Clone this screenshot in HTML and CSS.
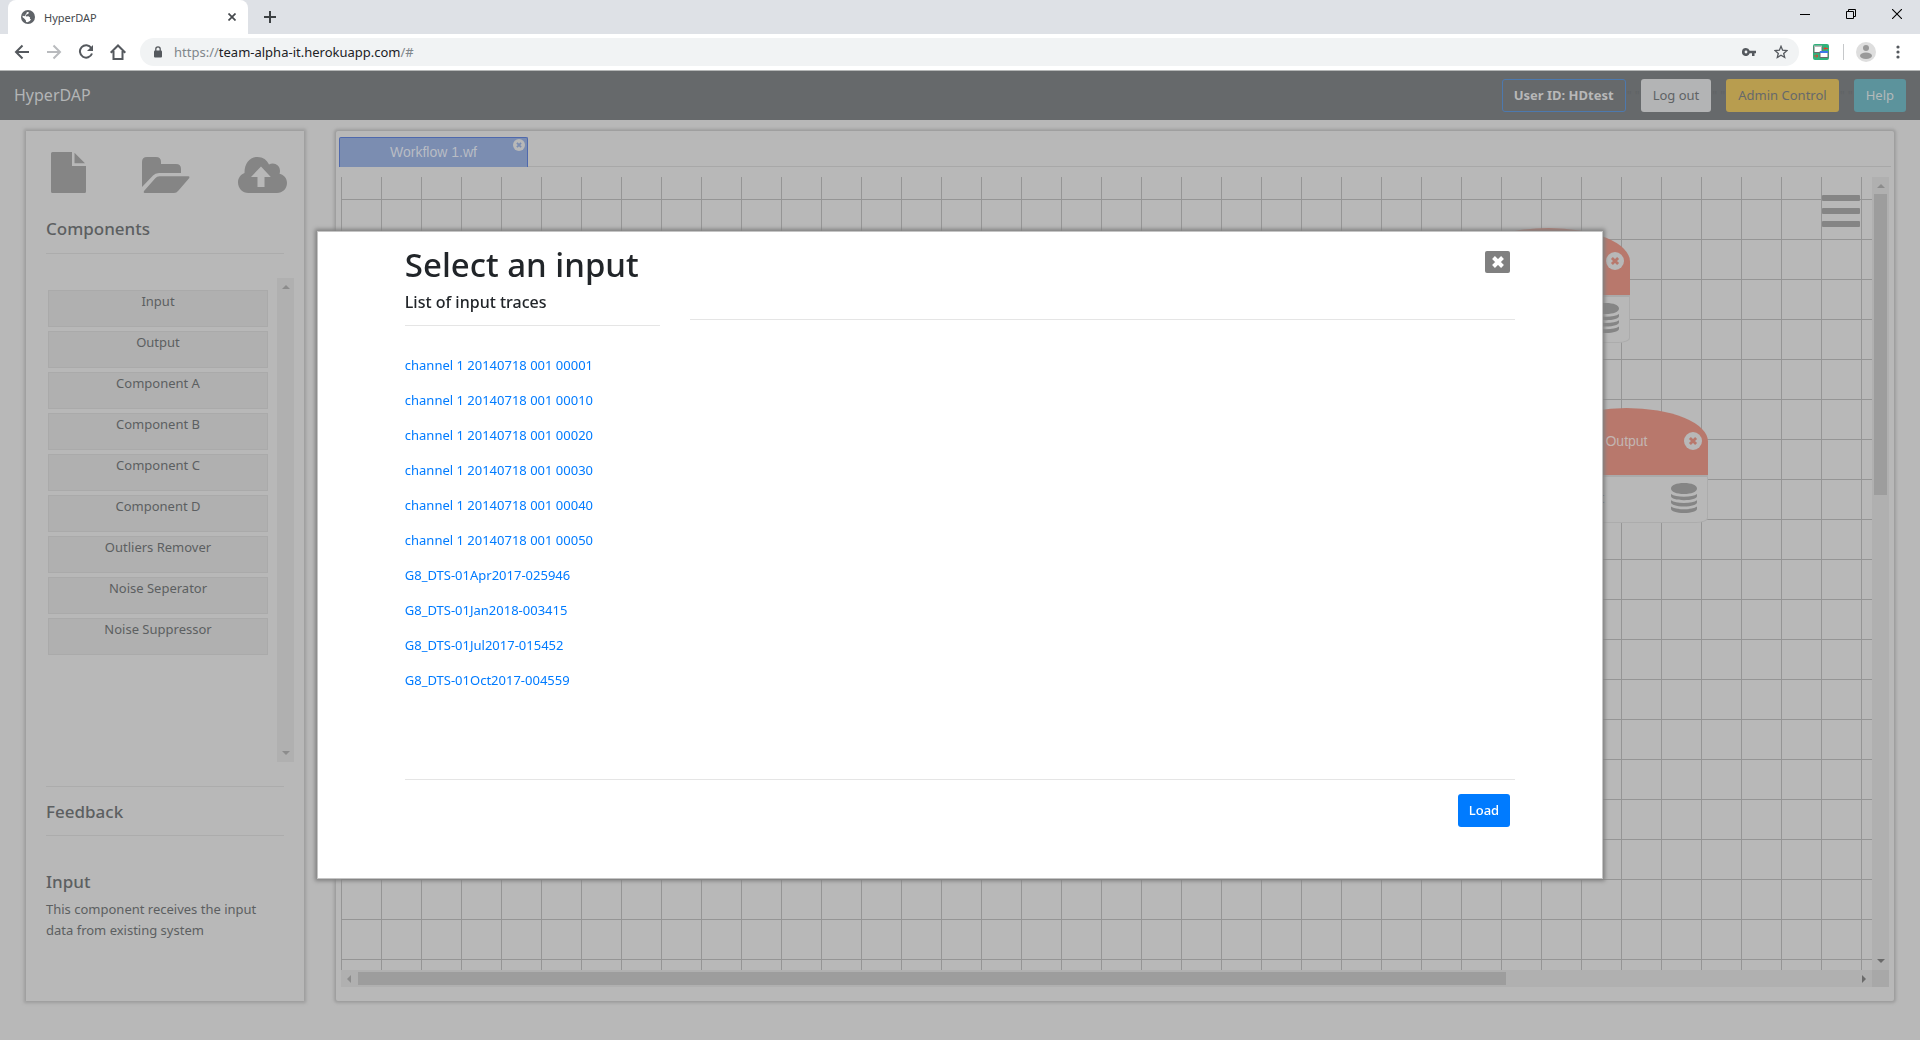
FILE: index.html
```html
<!DOCTYPE html>
<html lang="en">
<head>
<meta charset="utf-8">
<title>HyperDAP</title>
<link rel="stylesheet" href="styles.css">
</head>
<body>
<svg class="symbols" aria-hidden="true">
  <symbol id="i-circle-x" viewBox="0 0 18 18"><circle cx="9" cy="9" r="9" fill="#b8b8b8"/><path d="M5.900 5.900l6.200 6.200M12.100 5.900l-6.200 6.200" stroke="currentColor" stroke-width="2.800"/></symbol>
  <symbol id="i-database" viewBox="0 0 26 30"><path fill="#858585" d="M0 5.500C0 2.200 5.500 0 13 0s13 2.200 13 5.500S20.500 11 13 11 0 8.800 0 5.500zM0 11c2.500 1.700 7 2.700 13 2.700S23.500 12.700 26 11v2c0 2.500-5.500 4.200-13 4.200S0 15.500 0 13zM0 17.300C2.500 19 7 20 13 20s10.500-1 13-2.700v2c0 2.500-5.500 4.200-13 4.200S0 21.800 0 19.300zM0 23.600c2.500 1.700 7 2.700 13 2.700s10.500-1 13-2.700v2.200C26 28.300 20.500 30 13 30S0 28.300 0 25.800z"/></symbol>
</svg>

<header class="browser">
  <div class="tabstrip">
    <div class="browser-tab">
      <svg width="14" height="14" viewBox="0 0 14 14"><circle cx="7" cy="7" r="7" fill="#5f6368"/><path fill="#fff" d="M7.500 2l.3 1.300-1.500 1-1.600.6.200 1.600 2.500-.3 1.700 1.200-.2 1.500 1.200.3-1.300 1.800-2.300 1.200-1.400-.2-.3-1.800L3.200 8.500 1.400 7A5.700 5.700 0 0 1 7.500 2z"/><path fill="#5f6368" d="M1.500 5.500l2 .7 1.300-1.900 1.200-1.900L4 1.500z"/></svg>
      <span class="browser-title">HyperDAP</span>
      <button class="plain" aria-label="Close tab"><svg width="8" height="8" viewBox="0 0 8 8"><path d="M.5.500l7 7m0-7l-7 7" stroke="#45494d" stroke-width="1.700"/></svg></button>
    </div>
    <button class="plain new-tab" aria-label="New tab"><svg width="12" height="12" viewBox="0 0 12 12"><path d="M6 0v12M0 6h12" stroke="#3c4043" stroke-width="2"/></svg></button>
    <div class="window-buttons">
      <button class="plain" aria-label="Minimize"><svg width="10" height="10" viewBox="0 0 10 10"><path d="M0 5.500h10" stroke="#000"/></svg></button>
      <button class="plain" aria-label="Restore"><svg width="10" height="10" viewBox="0 0 10 10"><path d="M.5 2.500h7v7h-7zM2.500 2.500v-2h7v7h-2" fill="none" stroke="#000"/></svg></button>
      <button class="plain" aria-label="Close"><svg width="10" height="10" viewBox="0 0 10 10"><path d="M0 0l10 10M10 0L0 10" stroke="#000" stroke-width="1.100"/></svg></button>
    </div>
  </div>
  <div class="toolbar">
    <button class="plain" aria-label="Back"><svg width="16" height="16" viewBox="0 0 16 16"><path d="M15 8H2M8.500 1.500L2 8l6.500 6.500" fill="none" stroke="#55595e" stroke-width="2"/></svg></button>
    <button class="plain" aria-label="Forward"><svg width="16" height="16" viewBox="0 0 16 16"><path d="M1 8h13M7.500 1.500L14 8l-6.500 6.500" fill="none" stroke="#b9bbbe" stroke-width="2"/></svg></button>
    <button class="plain" aria-label="Reload"><svg width="16" height="16" viewBox="0 0 16 16"><path d="M13.300 4A6.200 6.200 0 1 0 14 9.500" fill="none" stroke="#55595e" stroke-width="2"/><path d="M15 1v6H9z" fill="#55595e"/></svg></button>
    <button class="plain" aria-label="Home"><svg width="16" height="16" viewBox="0 0 16 16"><path d="M.7 8.800L8 1.500l7.300 7.300M3.500 7v8h9V7" fill="none" stroke="#55595e" stroke-width="2"/></svg></button>
    <div class="address">
      <svg width="8" height="12" viewBox="0 0 8 12"><path d="M1.800 5V3a2.200 2.200 0 0 1 4.400 0v2" fill="none" stroke="#55595e" stroke-width="1.300"/><rect y="4.500" width="8" height="7" rx="1" fill="#55595e"/></svg>
      <span class="url">https://<b>team-alpha-it.herokuapp.com</b>/#</span>
      <svg width="14" height="8" viewBox="0 0 14 8"><path fill="#55595e" fill-rule="evenodd" d="M4 0a4 4 0 1 0 3.700 5.300H10V8h2.500V5.300H14V2.700H7.700A4 4 0 0 0 4 0zm0 2.600a1.400 1.400 0 1 1 0 2.800 1.400 1.400 0 0 1 0-2.800z"/></svg>
      <svg width="14" height="14" viewBox="0 0 14 14"><path d="M7 1.300l1.600 3.900 4.300.4-3.200 2.800 1 4.100L7 10.300l-3.700 2.200 1-4.100L1.100 5.600l4.300-.4z" fill="none" stroke="#55595e" stroke-width="1.300"/></svg>
    </div>
    <svg width="16" height="16" viewBox="0 0 16 16"><rect width="16" height="16" rx="2" fill="#30b27b"/><path d="M1 2.500h8v6H1zM7 7.500h8v6H7z" fill="#fff" stroke="#6b6b6b"/><path d="M1 1.500h8v1.500H1z" fill="#bbb"/><path d="M7 7h8v2H7z" fill="#3e78e8"/><path d="M15 4.500h-4m1.500-1.500L11 4.500 12.500 6M1 12h4m-1.500-1.500L5 12l-1.500 1.500" fill="none" stroke="#e33c2e"/></svg>
    <span class="divider"></span>
    <svg width="20" height="20" viewBox="0 0 20 20"><circle cx="10" cy="10" r="10" fill="#dedede"/><circle cx="10" cy="6" r="3" fill="#999"/><ellipse cx="10" cy="13.800" rx="6" ry="3.200" fill="#999"/></svg>
    <svg class="kebab" width="4" height="14" viewBox="0 0 4 14"><g fill="#55595e"><circle cx="2" cy="2" r="1.600"/><circle cx="2" cy="7" r="1.600"/><circle cx="2" cy="12" r="1.600"/></g></svg>
  </div>
</header>

<nav class="navbar">
  <a class="brand" href="#">HyperDAP</a>
  <button class="btn btn-user">User ID: HDtest</button><span class="sep">" "</span>
  <button class="btn btn-light">Log out</button><span class="sep">" "</span>
  <button class="btn btn-warning">Admin Control</button><span class="sep">" "</span>
  <button class="btn btn-info">Help</button>
</nav>

<main class="workspace">
  <aside class="panel sidebar">
    <div class="file-actions">
      <button class="plain" aria-label="New file"><svg width="36" height="41" viewBox="0 0 36 41"><path fill="#858585" d="M1.500 0H21v14h14v25.500q0 1.500-1.500 1.500h-32Q0 41 0 39.500v-38Q0 0 1.500 0zM23.500.800L34 11.300H23.500z"/></svg></button>
      <button class="plain" aria-label="Open file"><svg width="48" height="36" viewBox="0 0 48 36"><path fill="#858585" d="M0 30V5q0-5 5-5h9q5 0 5 5v2h15q5 0 5 5v4H17q-4 0-6 2.500zM2.500 36q-1.500-.5-.5-2L13.500 21q1.500-1.700 4-1.700H46.500q1.500.2.8 1.700L36.500 33.500Q34.500 36 32 36z"/></svg></button>
      <button class="plain" aria-label="Upload"><svg width="49" height="36" viewBox="0 0 49 36"><path fill="#858585" fill-rule="evenodd" d="M10.500 36C4.500 36 0 31.200 0 25.500c0-4.500 2.500-7.800 6.500-9.500C6.500 6 12 0 19.500 0c5.500 0 9.500 3 11.500 7.500 5-2.500 11 .500 11 6.500 0 1-.2 1.800-.5 2.700C46 17.700 49 21.300 49 26c0 5.700-4.500 10-10 10zM19.500 30h7V20h6.300L23 9.500 13 20h6.500z"/></svg></button>
    </div>
    <h2 class="heading">Components</h2>
    <hr>
    <div class="list-box">
      <ul class="component-list">
        <li>Input</li><li>Output</li><li>Component A</li><li>Component B</li><li>Component C</li><li>Component D</li><li>Outliers Remover</li><li>Noise Seperator</li><li>Noise Suppressor</li>
      </ul>
      <div class="vbar"><i class="arrow up"></i><i class="arrow down"></i></div>
    </div>
    <hr>
    <h2 class="heading feedback">Feedback</h2>
    <hr>
    <h2 class="heading detail">Input</h2>
    <p class="description">This component receives the input data from existing system</p>
  </aside>

  <section class="panel editor">
    <div class="file-tabs">
      <div class="file-tab">Workflow 1.wf<button class="plain tab-close" aria-label="Close workflow"><svg width="12" height="12"><use href="#i-circle-x"/></svg></button></div>
    </div>
    <div class="viewport">
      <div class="canvas">
        <div class="node node-input">
          <div class="node-head">Input<svg class="node-close" width="18" height="18"><use href="#i-circle-x"/></svg></div>
          <div class="node-body"><span>Input</span><svg width="26" height="30"><use href="#i-database"/></svg></div>
        </div>
        <div class="node node-output">
          <div class="node-head">Output<svg class="node-close" width="18" height="18"><use href="#i-circle-x"/></svg></div>
          <div class="node-body"><span>Output</span><svg width="26" height="30"><use href="#i-database"/></svg></div>
        </div>
        <button class="plain menu" aria-label="Menu"><i></i><i></i><i></i></button>
      </div>
      <div class="vbar"><i class="arrow up"></i><i class="thumb"></i><i class="arrow down dark"></i></div>
      <div class="hbar"><i class="arrow left"></i><i class="thumb"></i><i class="arrow right dark"></i></div>
      <div class="corner"></div>
    </div>
  </section>
</main>

<dialog class="modal" open aria-labelledby="modal-title">
  <button class="modal-close" aria-label="Close"><svg width="12" height="12" viewBox="0 0 12 12"><path d="M1.500 1.500l9 9m0-9l-9 9" stroke="#fff" stroke-width="4"/></svg></button>
  <h1 class="modal-title" id="modal-title">Select an input</h1>
  <div class="row">
    <div class="col traces">
      <h2 class="subtitle">List of input traces</h2>
      <hr>
      <ul class="trace-list">
        <li><a href="#">channel 1 20140718 001 00001</a></li>
        <li><a href="#">channel 1 20140718 001 00010</a></li>
        <li><a href="#">channel 1 20140718 001 00020</a></li>
        <li><a href="#">channel 1 20140718 001 00030</a></li>
        <li><a href="#">channel 1 20140718 001 00040</a></li>
        <li><a href="#">channel 1 20140718 001 00050</a></li>
        <li><a href="#">G8_DTS-01Apr2017-025946</a></li>
        <li><a href="#">G8_DTS-01Jan2018-003415</a></li>
        <li><a href="#">G8_DTS-01Jul2017-015452</a></li>
        <li><a href="#">G8_DTS-01Oct2017-004559</a></li>
      </ul>
    </div>
    <div class="col preview"><hr></div>
  </div>
  <hr>
  <div class="modal-footer"><button class="btn btn-primary">Load</button></div>
</dialog>
</body>
</html>
```
FILE: styles.css
```css
* { box-sizing: border-box; }
body {
  margin: 0;
  min-height: 100vh;
  display: flex;
  flex-direction: column;
  background: #b8b8b8;
  color: #5c5f61;
  font: 13px/21px "Noto Sans", "Open Sans", sans-serif;
}
svg { display: block; flex: none; }
.symbols { position: absolute; width: 0; height: 0; }
button { font: inherit; }
.plain { border: 0; padding: 0; background: none; display: block; }
ul { list-style: none; margin: 0; padding: 0; }
h1, h2, p { margin: 0; }
hr { border: 0; border-top: 1px solid #acacac; margin: 0; }

/* browser frame */
.browser { background: #fff; border-bottom: 1px solid #b5b7b7; }
.tabstrip { display: flex; align-items: center; height: 34px; background: #dee1e6; padding-left: 8px; }
.browser-tab {
  display: flex;
  align-items: center;
  width: 240px;
  height: 34px;
  padding: 0 12px 0 13px;
  background: #fff;
  border-radius: 8px 8px 0 0;
}
.browser-title { flex: 1; margin-left: 9px; font-size: 11px; color: #45494d; }
.new-tab { margin-left: 16px; }
.window-buttons { display: flex; gap: 36px; margin-left: auto; padding: 0 18px 6px 0; }
.toolbar { display: flex; align-items: center; height: 36px; padding: 0 20px 0 14px; gap: 16px; }
.address {
  flex: 1;
  display: flex;
  align-items: center;
  height: 28px;
  margin: 0 -2px;
  padding: 0 11px 0 14px;
  border-radius: 14px;
  background: #f1f3f4;
}
.url { flex: 1; margin-left: 12px; color: #80868b; }
.url b { font-weight: 400; color: #202124; }
.address svg + svg { margin-left: 18px; }
.divider { width: 1px; height: 16px; margin: 0 -4px 0 -2px; background: #c6c8ca; }
.kebab { margin-left: 4px; }

/* application bar */
.navbar { display: flex; align-items: center; height: 49px; padding: 0 14px; background: #66696b; }
.brand { margin-right: auto; font-size: 16px; color: #b3b5b6; text-decoration: none; }
.btn { height: 33px; padding: 0 11px; border: 1px solid transparent; border-radius: 3px; line-height: 21px; }
.btn-user { background: none; border-color: #4d79ae; color: #b8b8b8; font-weight: 700; }
.btn-light { background: #b3b4b5; color: #606365; }
.btn-warning { background: #b89d4f; color: #66696b; }
.btn-info { background: #5c939c; color: #b3b9ba; }
.btn-primary { background: #007bff; color: #fff; font-weight: 500; padding: 0 10px; }
.sep { width: 15px; text-align: center; font-size: 12px; color: #606365; }

/* workspace */
.workspace { flex: 1; display: grid; grid-template-columns: 278px 1fr; gap: 32px; padding: 11px 26px 39px; }
.panel { min-width: 0; border-radius: 2px; box-shadow: 0 0 3px 2px #9c9c9c; }
.sidebar { padding: 21px 20px 0; border-radius: 0; }
.file-actions { display: flex; justify-content: space-between; align-items: flex-end; padding: 0 0 0 5px; margin-right: -3px; }
.file-actions button:nth-child(2) { margin-left: 6px; }
.heading { font-size: 17px; font-weight: 500; line-height: 24px; margin: 24px 0 12px; }
.list-box { display: flex; justify-content: space-between; height: 484px; margin: 24px -10px 24px 0; }
.component-list { flex: 1; margin: 12px 9px 0 2px; display: flex; flex-direction: column; gap: 4px; }
.component-list li { height: 37px; border: 1px solid #aaa; background: #b0b0b0; text-align: center; }
.heading.feedback { margin: 13px 0 11px; }
.heading.detail { margin: 34px 0 5px; }

.vbar { width: 17px; background: #b0b0b0; display: flex; flex-direction: column; align-items: center; }
.hbar { height: 17px; background: #b0b0b0; display: flex; align-items: center; }
.arrow { border: 4px solid transparent; flex: none; }
.arrow.up { border-bottom-color: #8c8c8c; border-top-width: 0; margin: 7px 0 6px; }
.arrow.down { border-top-color: #8c8c8c; border-bottom-width: 0; margin: auto 0 7px; }
.arrow.left { border-right-color: #8c8c8c; border-left-width: 0; margin: 0 7px 0 6px; }
.arrow.right { border-left-color: #8c8c8c; border-right-width: 0; margin: 0 6px 0 auto; }
.arrow.down.dark { border-top-color: #6a6a6a; }
.arrow.right.dark { border-left-color: #6a6a6a; }
.thumb { background: #9d9d9d; }
.vbar .thumb { width: 13px; height: 38%; }
.hbar .thumb { height: 13px; width: 75%; }

.editor { display: flex; flex-direction: column; padding: 6px 3px 14px; }
.file-tabs { display: flex; border-bottom: 1px solid #a8a8a8; }
.file-tab {
  position: relative;
  width: 189px;
  height: 30px;
  margin-bottom: -1px;
  border: 1px solid #4f69ad;
  border-bottom: 0;
  border-radius: 2px 2px 0 0;
  background: #7b8db1;
  color: #b8bcc4;
  text-align: center;
  font: 14px/29px "Liberation Sans", Arial, sans-serif;
}
.tab-close { position: absolute; top: 1px; right: 2px; color: #7b8db1; }
.viewport { flex: 1; display: grid; grid-template: 1fr 17px / 1fr 17px; margin: 10px 2px 0; }
.canvas {
  position: relative;
  overflow: hidden;
  background-image: linear-gradient(90deg, #959595 1px, transparent 1px), linear-gradient(#959595 1px, transparent 1px);
  background-size: 40px 40px;
  background-position: 0 22px;
}
.corner { background: #a8a8a8; }
.menu { position: absolute; top: 18px; right: 12px; width: 38px; }
.menu i { display: block; height: 6px; margin-bottom: 7px; border-radius: 1px; background: #858585; }

.node { position: absolute; width: 163px; font: 14px/67px "Liberation Sans", Arial, sans-serif; }
.node-input { left: 1126px; top: 51px; }
.node-output { left: 1204px; top: 231px; }
.node-head { position: relative; height: 67px; border-radius: 50% 50% 0 0; background: #b8786c; color: #c3b5b2; text-align: center; }
.node-close { position: absolute; right: 6px; top: 24px; color: #b8786c; }
.node-body {
  display: flex;
  align-items: center;
  justify-content: space-between;
  height: 48px;
  padding: 0 10px 3px 16px;
  border: 1px solid #acacac;
  border-top: 2px solid #aaa;
  border-radius: 0 0 12px 12px / 0 0 5px 5px;
  background: #b8b8b8;
}

/* dialog */
.modal {
  position: fixed;
  inset: 231px 0 auto;
  width: 67%;
  margin: 0 auto;
  padding: 13px 87px 51px;
  border: 1px solid #c4c4c4;
  background: #fff;
  color: #212529;
  box-shadow: 0 0 4px 2px #808080;
}
.modal hr { border-color: #e5e5e5; }
.modal-close {
  position: absolute;
  top: 19px;
  right: 92px;
  width: 25px;
  height: 22px;
  padding: 0;
  display: flex;
  align-items: center;
  justify-content: center;
  border: 0;
  border-radius: 2px;
  background: #808080;
}
.modal-title { font-size: 33px; font-weight: 500; line-height: 40px; }
.row { display: flex; margin: 0 -15px; }
.col { padding: 0 15px; }
.traces { width: 25%; height: 494px; padding-top: 5px; }
.preview { width: 75%; padding-top: 34px; }
.subtitle { font-size: 16px; font-weight: 500; line-height: 24px; margin-bottom: 11px; }
.trace-list { margin-top: 29px; display: flex; flex-direction: column; gap: 14px; }
.trace-list a { color: #007bff; text-decoration: none; white-space: nowrap; }
.modal-footer { display: flex; justify-content: flex-end; padding: 14px 5px 0; }
```
